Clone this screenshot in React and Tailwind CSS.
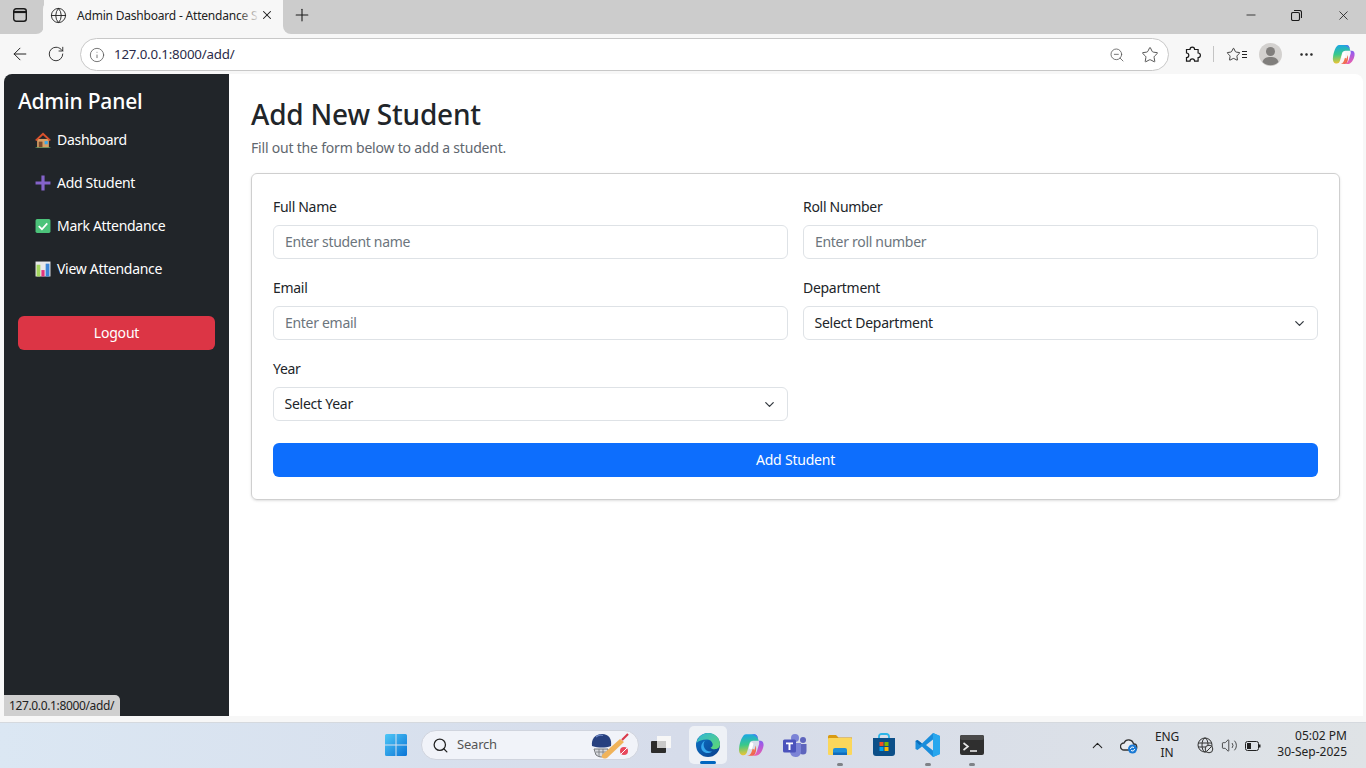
import { ArrowLeft, RotateCw, Info, ZoomOut, Star, Minus, X, Plus, Globe, MoreHorizontal, ChevronDown, ChevronUp, Search, Volume2 } from 'lucide-react';

function HouseEmoji() {
  return (
    <svg width="16" height="16" viewBox="0.500 0.500 15 15" className="shrink-0">
      <rect x="2.500" y="7" width="11" height="8" fill="#d9a066" />
      <path d="M0.500 8 L8 1 L15.500 8 L14 9 L8 3.600 L2 9 Z" fill="#d9512c" />
      <rect x="4" y="9.500" width="3.500" height="5.500" fill="#7a4a2c" />
      <rect x="9.500" y="9" width="3" height="3" fill="#3ba7e8" />
      <rect x="1" y="15" width="14" height="1" fill="#6fbf73" />
    </svg>
  );
}

function PlusEmoji() {
  return (
    <svg width="16" height="16" viewBox="0.500 0.500 15 15" className="shrink-0">
      <path d="M6.500 1h3v5.500H15v3H9.500V15h-3V9.500H1v-3h5.500z" fill="#8463c9" />
    </svg>
  );
}

function CheckEmoji() {
  return (
    <svg width="16" height="16" viewBox="0.500 0.500 15 15" className="shrink-0">
      <rect x="1" y="1.500" width="14" height="13" rx="1.500" fill="#4cc37a" />
      <path d="M4 8.200 L7 11 L12 5.500" fill="none" stroke="#fff" strokeWidth="1.600" />
    </svg>
  );
}

function ChartEmoji() {
  return (
    <svg width="16" height="16" viewBox="0.500 0.500 15 15" className="shrink-0">
      <rect x="1" y="1" width="14" height="14" fill="#e8e8ea" />
      <rect x="2" y="4" width="3.500" height="11" fill="#a4d65e" />
      <rect x="6.500" y="9" width="3" height="6" fill="#e3357f" />
      <rect x="10.500" y="3" width="3.500" height="12" fill="#3d86d8" />
    </svg>
  );
}

function CopilotLogo({ size = 24, id }) {
  return (
    <svg width={size} height={size} viewBox="0 0 24 24">
      <defs>
        <linearGradient id={id + 'a'} x1="0.300" y1="0" x2="0.400" y2="1">
          <stop offset="0" stopColor="#1aa6e6" />
          <stop offset="0.500" stopColor="#38c98a" />
          <stop offset="1" stopColor="#f7c52e" />
        </linearGradient>
        <linearGradient id={id + 'b'} x1="0.500" y1="0" x2="0.500" y2="1">
          <stop offset="0" stopColor="#3f7cf0" />
          <stop offset="0.450" stopColor="#a05ae8" />
          <stop offset="1" stopColor="#ef5fa8" />
        </linearGradient>
        <linearGradient id={id + 'c'} x1="0" y1="0" x2="1" y2="1">
          <stop offset="0" stopColor="#f5a13a" />
          <stop offset="1" stopColor="#ee4f5a" />
        </linearGradient>
      </defs>
      <path d="M7.500 2H15c1.500 0 2.500.8 3 2.300L19 8h-5c-2 0-3 1-3.600 3L8.500 18c-.5 2-1.700 3.500-3.500 3.500-3 0-4.500-2.800-4-6.500C1.600 9.500 4 2 7.500 2z" fill={'url(#' + id + 'a)'} />
      <path d="M12 2h3c1.500 0 2.500.8 3 2.300L19 8h1.500c2.300 0 3.500 2 3 5-.7 4.500-3.500 9-7.500 9h-3c2.500-.5 3.700-2 4.500-4.500l2-6.500c.7-2.500-1.500-8-7.500-9z" fill={'url(#' + id + 'b)'} />
      <path d="M9 22c3.200 0 5-1.800 6-5l1.400-4.500c.8 3.500.3 9.500-3.400 9.500z" fill={'url(#' + id + 'c)'} />
      <path d="M8 22c2 0 3.500-1 4.500-3.500l1-3 2 1c-1 3.500-2.500 5.500-6 5.500z" fill={'url(#' + id + 'c)'} />
      <rect x="10.500" y="9.500" width="3.200" height="6.500" rx="1.600" fill="#ffffff" transform="rotate(15 12 13)" />
    </svg>
  );
}

function EdgeLogo() {
  return (
    <svg width="26" height="26" viewBox="0 0 26 26">
      <defs>
        <linearGradient id="edgeTop" x1="0" y1="0" x2="1" y2="1">
          <stop offset="0" stopColor="#2fb6d8" />
          <stop offset="1" stopColor="#5fd86f" />
        </linearGradient>
        <linearGradient id="edgeBottom" x1="0" y1="0" x2="1" y2="1">
          <stop offset="0" stopColor="#0c75c9" />
          <stop offset="1" stopColor="#0a3f8c" />
        </linearGradient>
      </defs>
      <circle cx="13" cy="13" r="12" fill="url(#edgeBottom)" />
      <path d="M1.500 11C3 4.500 8 1 13 1c6.500 0 12 4.800 12 11 0 3.500-2.800 5.200-5.500 5.200-2 0-3.500-.7-4-1.500 2-1 2.500-2.500 2.100-4C16.900 9 14.500 7.500 12 7.500 7 7.500 3.500 9 1.500 11z" fill="url(#edgeTop)" />
      <path d="M12 8c-3 .5-4 3.500-3 7 1 3.300 4.500 5 8 4.500-3 2.500-7 1.800-9.500-.8C5 15.500 6 9.500 12 8z" fill="#35a8ee" />
    </svg>
  );
}

function TeamsLogo() {
  return (
    <svg width="26" height="26" viewBox="0 0 26 26">
      <circle cx="13" cy="6" r="4" fill="#7b83d6" />
      <circle cx="21" cy="8" r="3" fill="#5e65bd" />
      <path d="M17 12h7.500v7a3.500 3.500 0 0 1-7 0z" fill="#5e65bd" />
      <path d="M8 11h11v9a5 5 0 0 1-5.500 5C10 25 8 22 8 19z" fill="#7b83d6" />
      <rect x="1" y="7.500" width="13" height="13" rx="1.500" fill="#4b53bc" />
      <path d="M4 10.500h7v1.800H8.500V18h-2v-5.700H4z" fill="#fff" />
    </svg>
  );
}

function FolderLogo() {
  return (
    <svg width="24" height="24" viewBox="0 0 24 24">
      <path d="M0 3.500A1.500 1.500 0 0 1 1.500 2H8l2.500 2.500H24V8H0z" fill="#d99a12" />
      <rect x="0" y="5" width="24" height="17" rx="1" fill="#fbd75b" />
      <path d="M5 22v-5a2 2 0 0 1 2-2h10a2 2 0 0 1 2 2v5z" fill="#1f8fd8" />
      <rect x="5" y="19.500" width="14" height="2.500" fill="#0f6cbd" />
    </svg>
  );
}

function StoreLogo() {
  return (
    <svg width="24" height="24" viewBox="0 0 24 24">
      <path d="M7 6V3.500A2.500 2.500 0 0 1 9.500 1h5A2.500 2.500 0 0 1 17 3.500V6" fill="none" stroke="#2cb5e8" strokeWidth="1.800" />
      <path d="M1 5h22v15a3 3 0 0 1-3 3H4a3 3 0 0 1-3-3z" fill="#0c4f88" />
      <rect x="7.500" y="9" width="4" height="4" fill="#f25022" />
      <rect x="12.500" y="9" width="4" height="4" fill="#7fba00" />
      <rect x="7.500" y="14" width="4" height="4" fill="#00a4ef" />
      <rect x="12.500" y="14" width="4" height="4" fill="#ffb900" />
    </svg>
  );
}

function VscodeLogo() {
  return (
    <svg width="26" height="26" viewBox="0 0 26 26">
      <path d="M18 1 L25 4 V22 L18 25 L7 14.500 L2.500 18 L0.500 17 V9 L2.500 8 L7 11.500 Z M18 7.500 L11 13 L18 18.500 Z" fill="#1a8ddb" fillRule="evenodd" />
      <path d="M18 1 L25 4 V22 L18 25 Z" fill="#27a7ee" />
      <path d="M0.500 9 L2.500 8 L7 11.500 L4.500 13 Z" fill="#0b6cb8" />
    </svg>
  );
}

function TerminalLogo() {
  return (
    <svg width="24" height="22" viewBox="0 0 24 22">
      <rect x="0" y="1" width="24" height="20" rx="2" fill="#2f2f2f" />
      <rect x="0" y="1" width="24" height="5" rx="2" fill="#4a4a4a" />
      <path d="M3.500 9 L8 12.500 L3.500 16" fill="none" stroke="#e6e6e6" strokeWidth="1.600" />
      <path d="M10 17h7" stroke="#e6e6e6" strokeWidth="1.600" />
    </svg>
  );
}

function WindowsLogo() {
  return (
    <svg width="24" height="24" viewBox="0 0 24 24">
      <defs>
        <linearGradient id="winBlue" x1="0" y1="0" x2="1" y2="1">
          <stop offset="0" stopColor="#4fc8f7" />
          <stop offset="1" stopColor="#0a74d6" />
        </linearGradient>
      </defs>
      <path d="M1 2.500A1.500 1.500 0 0 1 2.500 1h9v10.500H1zM12.500 1h9A1.500 1.500 0 0 1 23 2.500v9H12.500zM1 12.500h10.500V23h-9A1.500 1.500 0 0 1 1 21.500zM12.500 12.500H23v9a1.500 1.500 0 0 1-1.500 1.500h-9z" fill="url(#winBlue)" />
    </svg>
  );
}

function CricketBadge() {
  return (
    <svg width="42" height="28" viewBox="0 0 42 28">
      <path d="M5 18 L19 18 L18 24 Q12 28 7 24 Z" fill="#d8dade" stroke="#77797d" strokeWidth="1" />
      <path d="M7 21h11M10 18v8M14 18v8" stroke="#77797d" strokeWidth="0.800" />
      <path d="M3 15C2 8 6 3 13 3s10 5 9 12c-6 2-12 2-19 0z" fill="#27407f" />
      <path d="M7 6c2-2 5-2 7-1.500" fill="none" stroke="#6d86c4" strokeWidth="1.200" />
      <path d="M13 24 L31 8 L35 11 L18 27 Q12 29 13 24z" fill="#f0b35a" />
      <path d="M33 9 L39 3" stroke="#d9394a" strokeWidth="2.200" />
      <circle cx="35" cy="20" r="4" fill="#e8475c" />
      <path d="M32 23 L38 17" stroke="#fff" strokeWidth="1" />
    </svg>
  );
}

function Field({ label, placeholder }) {
  return (
    <div className="flex flex-col">
      <label className="h-[21px] mb-[8px] text-[14px] leading-[21px] text-[#212529]">{label}</label>
      <input
        placeholder={placeholder}
        className="h-[34px] px-[11px] pb-[2px] rounded-[6px] border border-[#dee2e6] bg-white text-[14px] tracking-[-0.3px] placeholder:text-[#6c757d] outline-none"
      />
    </div>
  );
}

function SelectField({ label, value }) {
  return (
    <div className="flex flex-col">
      <label className="h-[21px] mb-[8px] text-[14px] leading-[21px] text-[#212529]">{label}</label>
      <div className="h-[34px] pl-[10.500px] pr-[10px] rounded-[6px] border border-[#dee2e6] bg-white flex items-center justify-between text-[14px] tracking-[-0.25px] text-[#212529]">
        <span className="pb-[2px]">{value}</span>
        <ChevronDown size={15} strokeWidth={2} className="text-[#343a40]" />
      </div>
    </div>
  );
}

function NavItem({ icon, label }) {
  return (
    <a className="h-[37px] mb-[6px] pl-[17px] flex items-center gap-[6px] text-[14px] tracking-[-0.3px] text-white">
      {icon}
      <span>{label}</span>
    </a>
  );
}

function TaskbarIcon({ children, running }) {
  return (
    <div className="relative w-[44px] h-[38px] flex items-center justify-center">
      {children}
      {running && <span className="absolute bottom-[-2px] left-[19px] w-[6px] h-[3px] rounded-full bg-[#7f8287]" />}
    </div>
  );
}

export default function App() {
  const navLinks = [
    { label: 'Dashboard', icon: <HouseEmoji /> },
    { label: 'Add Student', icon: <PlusEmoji /> },
    { label: 'Mark Attendance', icon: <CheckEmoji /> },
    { label: 'View Attendance', icon: <ChartEmoji /> },
  ];

  return (
    <div className="relative h-screen w-[1366px] overflow-hidden flex flex-col bg-[#f7f7f7] font-['Noto_Sans',sans-serif] tracking-[-0.2px]">
      {/* tab strip */}
      <div className="h-[34px] shrink-0 bg-[#f7f7f7] flex">
        <div className="w-[44px] h-[34px] bg-[#cccccc] rounded-br-[8px] flex items-center pl-[13px] pb-[4px]">
          <svg width="14" height="14" viewBox="0 0 14 14" fill="none" stroke="#1a1a1a" strokeWidth="1.400">
            <rect x="0.700" y="0.700" width="12.600" height="12.600" rx="2.500" />
            <path d="M0.700 4h12.600" strokeWidth="2.200" />
          </svg>
        </div>
        <div className="relative w-[240px] h-[34px] rounded-t-[9px] bg-[#f7f7f7] flex items-center pl-[7px] pb-[4px] -ml-px">
          <Globe size={17} strokeWidth={1.300} className="text-[#222] shrink-0" />
          <span className="ml-[10px] mt-[2px] whitespace-nowrap text-[12px] text-[#222]">Admin Dashboard - Attendance S</span>
          <span className="absolute left-[195px] top-[5px] w-[22px] h-[22px] bg-gradient-to-r from-[#f7f7f700] to-[#f7f7f7]" />
          <X size={14} strokeWidth={1.800} className="absolute left-[217px] top-[8px] text-[#1a1a1a]" />
        </div>
        <div className="flex-1 h-[34px] bg-[#cccccc] rounded-bl-[8px] flex items-center pb-[4px] pl-[9px] text-[#1a1a1a]">
          <Plus size={20} strokeWidth={1.300} />
          <Minus size={14} strokeWidth={1.400} className="ml-auto mr-[33px]" />
          <svg width="11" height="11" viewBox="0 0 11 11" fill="none" stroke="#1a1a1a" strokeWidth="1.100" className="mr-[34px]">
            <rect x="0.500" y="2.500" width="8" height="8" rx="1.500" />
            <path d="M3 .5h5.500a2 2 0 0 1 2 2V8" />
          </svg>
          <X size={15} strokeWidth={1.300} className="mr-[15px]" />
        </div>
      </div>

      {/* toolbar */}
      <div className="h-[40px] pt-[3px] shrink-0 flex items-start text-[#222]">
        <div className="w-[40px] h-[34px] flex items-center justify-center">
          <ArrowLeft size={20} strokeWidth={1.200} />
        </div>
        <div className="w-[32px] h-[34px] flex items-center justify-center">
          <RotateCw size={18} strokeWidth={1.200} />
        </div>
        <div className="ml-[8px] w-[1089px] h-[33px] mt-[1px] rounded-full border border-[#c8c8c8] bg-white flex items-center pl-[8px] pr-[9px]">
          <Info size={16} strokeWidth={1.200} className="text-[#555]" />
          <span className="ml-[9px] text-[13.3px] tracking-[-0.18px] text-[#2b2b4a]">127.0.0.1:8000/add/</span>
          <ZoomOut size={16} strokeWidth={1.200} className="ml-auto mr-[16px] text-[#555]" />
          <Star size={18} strokeWidth={1.200} className="text-[#444]" />
        </div>
        <div className="h-[34px] flex items-center">
          <svg width="18" height="18" viewBox="0 0 18 18" fill="none" stroke="#1a1a1a" strokeWidth="1.200" className="ml-[15px]">
            <path d="M2.500 4.500h3.500a2.300 2.300 0 1 1 4.600 0h3.500V8a2.300 2.300 0 1 1 0 4.600v3.500h-3.500a2.300 2.300 0 1 0-4.600 0H2.500v-3.500a2.300 2.300 0 1 0 0-4.600z" />
          </svg>
          <span className="ml-[11px] w-px h-[16px] bg-[#c4c4c4]" />
          <Star size={15} strokeWidth={1.300} className="ml-[12px] text-[#1a1a1a]" />
          <span className="ml-px flex flex-col gap-[2px]">
            <span className="w-[5px] h-px bg-[#222]" />
            <span className="w-[5px] h-px bg-[#222]" />
            <span className="w-[5px] h-px bg-[#222]" />
          </span>
          <svg width="23" height="23" viewBox="0 0 23 23" className="ml-[12px]">
            <circle cx="11.500" cy="11.500" r="11.500" fill="#d3d1cf" />
            <circle cx="11.500" cy="8.500" r="4.500" fill="#807e7c" />
            <path d="M3.500 19c1-4 4-5 8-5s7 1 8 5a11.500 11.500 0 0 1-16 0z" fill="#807e7c" />
          </svg>
          <MoreHorizontal size={17} strokeWidth={1.600} className="ml-[16px] text-[#1a1a1a]" />
          <span className="ml-[17px]"><CopilotLogo size={23} id="copilotTop" /></span>
        </div>
      </div>

      {/* page */}
      <div className="flex-1 min-h-0 pl-[4px] pr-[3px] pb-[6px] bg-[#f7f7f7]">
        <div className="h-full flex rounded-t-[8px] overflow-hidden bg-white">
          <aside className="w-[225px] shrink-0 bg-[#212529] px-[14px] pt-[12px]">
            <h2 className="h-[33px] text-[21px] leading-[31px] font-medium text-white">Admin Panel</h2>
            <nav className="mt-[2px] flex flex-col">
              {navLinks.map((link, index) => (
                <NavItem key={index} icon={link.icon} label={link.label} />
              ))}
            </nav>
            <button className="mt-[23px] w-full h-[34px] pb-[2px] rounded-[6px] bg-[#dc3545] text-[14px] text-white">Logout</button>
          </aside>
          <main className="flex-1 pl-[22px] pr-[23px] pt-[18px]">
            <h1 className="h-[45px] text-[28px] leading-[44px] font-medium tracking-[-0.2px] text-[#212529]">Add New Student</h1>
            <p className="h-[21px] text-[14px] leading-[21px] text-[#5f676f]">Fill out the form below to add a student.</p>
            <form className="mt-[15px] rounded-[6px] border border-[#cfcfcf] shadow-sm px-[21px] pt-[22px] pb-[22px]">
              <div className="grid grid-cols-2 gap-x-[15px] gap-y-[18px] tracking-[-0.3px]">
                <Field label="Full Name" placeholder="Enter student name" />
                <Field label="Roll Number" placeholder="Enter roll number" />
                <Field label="Email" placeholder="Enter email" />
                <SelectField label="Department" value="Select Department" />
                <SelectField label="Year" value="Select Year" />
              </div>
              <button type="button" className="mt-[22px] w-full h-[34px] pb-[2px] rounded-[6px] bg-[#0d6efd] text-[14px] text-white">Add Student</button>
            </form>
          </main>
        </div>
      </div>

      {/* link preview at the bottom of the window */}
      <div className="absolute left-[4px] top-[695px] w-[116px] h-[21px] rounded-tr-[5px] bg-[#cfcfcf] pl-[5px] text-[12px] tracking-[-0.36px] leading-[21px] text-[#222]">127.0.0.1:8000/add/</div>

      {/* taskbar */}
      <div className="h-[46px] shrink-0 border-t border-[#d5d9de] bg-gradient-to-r from-[#dbe7f3] via-[#d6dcea] to-[#dfe3e6] flex items-center relative">
        <div className="absolute left-[374px] top-[3px] flex items-center">
          <div className="w-[44px] h-[38px] flex items-center justify-center"><WindowsLogo /></div>
          <div className="ml-[3px] w-[218px] h-[30px] rounded-full bg-[#f1f3f9] border border-[#d0d4de] flex items-center pl-[10px]">
            <Search size={17} strokeWidth={1.800} className="text-[#222]" />
            <span className="ml-[8px] text-[13px] text-[#555]">Search</span>
            <span className="ml-auto mr-[7px]"><CricketBadge /></span>
          </div>
          <div className="ml-[11px] w-[22px] h-[38px] flex items-center justify-center">
            <svg width="22" height="22" viewBox="0 0 22 22">
              <rect x="7" y="2" width="14" height="12" fill="#f7f7f7" />
              <rect x="1" y="7" width="15" height="12" rx="1" fill="#2c2c2c" />
              <rect x="7" y="7" width="9" height="7" fill="#c9c9c9" />
            </svg>
          </div>
          <div className="relative ml-[17px] w-[38px] h-[38px] rounded-[5px] bg-[#eef1f6] flex items-center justify-center">
            <EdgeLogo />
            <span className="absolute bottom-0 left-[11px] w-[16px] h-[3px] rounded-full bg-[#0067c0]" />
          </div>
          <div className="ml-[2px]"><TaskbarIcon><CopilotLogo size={26} id="copilotTask" /></TaskbarIcon></div>
          <TaskbarIcon><TeamsLogo /></TaskbarIcon>
          <div className="ml-px"><TaskbarIcon running><FolderLogo /></TaskbarIcon></div>
          <TaskbarIcon><StoreLogo /></TaskbarIcon>
          <TaskbarIcon running><VscodeLogo /></TaskbarIcon>
          <TaskbarIcon running><TerminalLogo /></TaskbarIcon>
        </div>

        <div className="ml-auto flex items-center text-[#222]">
          <ChevronUp size={17} strokeWidth={1.500} />
          <svg width="18" height="16" viewBox="0 0 18 16" className="ml-[14px]">
            <path d="M4 12a3.500 3.500 0 0 1 0-7 5 5 0 0 1 9.500 1A3 3 0 0 1 14 12z" fill="#e9ebef" stroke="#333" strokeWidth="1.300" />
            <circle cx="12.500" cy="11" r="4.500" fill="#1a79d4" />
            <path d="M10.500 11a2 2 0 0 1 3.500-1.300M14.500 11a2 2 0 0 1-3.500 1.300" fill="none" stroke="#fff" strokeWidth="1" />
          </svg>
          <div className="ml-[9px] w-[40px] pb-[2px] text-center text-[12px] leading-[16px]">ENG<br />IN</div>
          <svg width="17" height="17" viewBox="0 0 17 17" fill="none" stroke="#333" className="ml-[10px]">
            <circle cx="8" cy="8" r="7" />
            <ellipse cx="8" cy="8" rx="3" ry="7" />
            <path d="M1 6h14M1 10h14" />
            <circle cx="12" cy="12" r="3.800" fill="#dfe3e6" />
            <path d="M9.500 14.500 L14.500 9.500" />
          </svg>
          <Volume2 size={17} strokeWidth={1.100} className="ml-[7px]" />
          <svg width="16" height="10" viewBox="0 0 16 10" className="ml-[7px]">
            <rect x="0.500" y="0.500" width="13" height="9" rx="2" fill="none" stroke="#222" />
            <rect x="2" y="2" width="4" height="6" fill="#222" />
            <rect x="14" y="3.500" width="1.500" height="3" fill="#222" />
          </svg>
          <div className="ml-[16px] mr-[19px] w-[70px] pb-[3px] text-right text-[12px] tracking-normal leading-[16px] whitespace-nowrap">05:02 PM<br />30-Sep-2025</div>
        </div>
      </div>
    </div>
  );
}
